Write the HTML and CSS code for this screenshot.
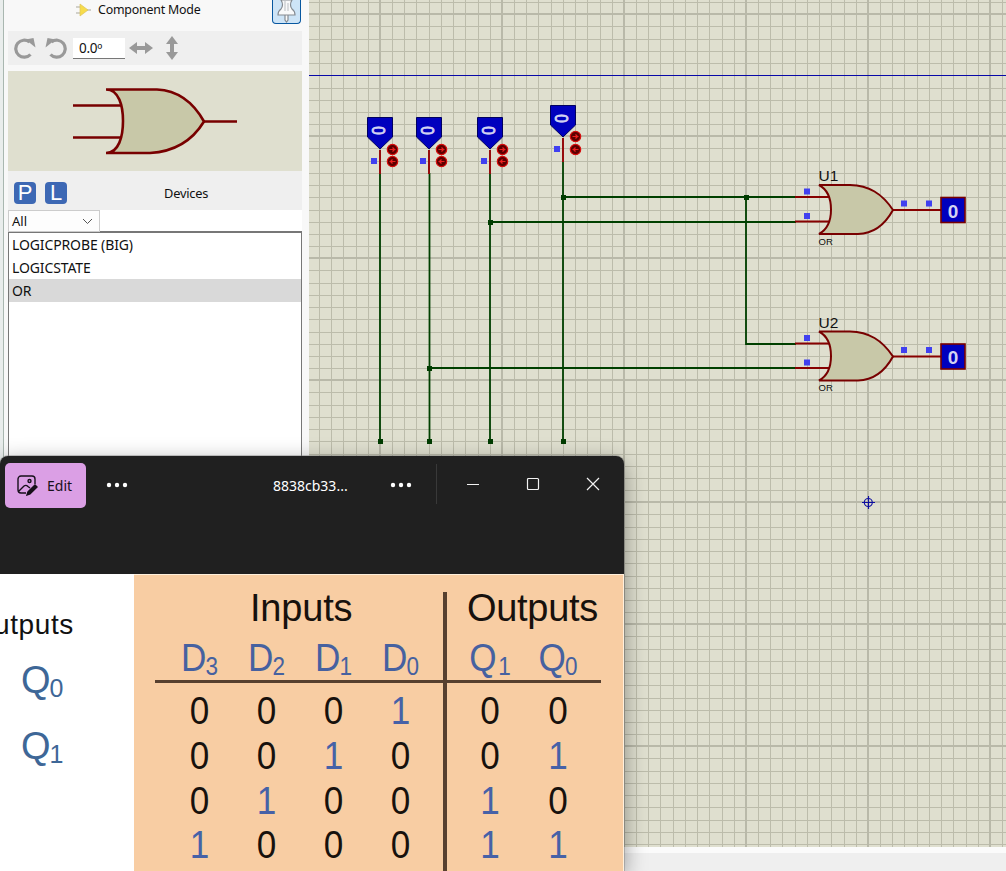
FILE: index.html
```html
<!DOCTYPE html>
<html lang="en">
<head>
<meta charset="utf-8">
<title>Schematic</title>
<link rel="stylesheet" href="styles.css">
</head>
<body>
<div class="app">
  <aside class="panel">
    <header class="mode">
      <svg class="mode-icon" width="16" height="14" viewBox="0 0 16 14"><path d="M1 4h5M1 10h5M12 7h4" stroke="#aaa89a"/><path d="M5 1l8 6-8 6z" fill="#f7dc4b" stroke="#dcc35c" stroke-width=".7"/></svg>
      <span class="mode-title">Component Mode</span>
      <span class="pin"><svg width="26" height="24" viewBox="0 0 26 24"><path d="M8 0q3 5 0 9-3 2-3 6h17q0-4-3-6-3-4 0-9zM12 15v5l1.500 2 1.500-2v-5" fill="#f8f9fa" stroke="#858b92" stroke-width="1.2"/><path d="M12 1v10M15 3v8" stroke="#b9bdc2"/></svg></span>
    </header>
    <div class="tools">
      <svg width="22" height="24" viewBox="0 0 22 24"><path d="M16.500 18.500A8.500 8.500 0 1 1 15.500 6" fill="none" stroke="#999" stroke-width="3.2"/><path d="M11.500 3.500L19.500 2l2 9.500z" fill="#999"/></svg>
      <svg class="undo" width="22" height="24" viewBox="0 0 22 24"><path d="M5.500 18.500A8.500 8.500 0 1 0 6.500 6" fill="none" stroke="#999" stroke-width="3.200"/><path d="M10.500 3.500L2.500 2l-2 9.500z" fill="#999"/></svg>
      <span class="angle">0.0º</span>
      <svg class="flip-h" width="24" height="14" viewBox="0 0 24 14"><path d="M0 7l8-6v4h8V1l8 6-8 6V9H8v4z" fill="#999"/></svg>
      <svg class="flip-v" width="14" height="24" viewBox="0 0 14 24"><path d="M7 0l6 8H9v8h4l-6 8-6-8h4V8H1z" fill="#999"/></svg>
    </div>
    <div class="preview">
      <svg width="294" height="100" viewBox="8 71 294 100" fill="none" stroke="#780000" stroke-width="2.6"><path d="M106 89.500H157Q187 91 204 121.500Q186 151 150 153H106C119 153 123 136 123 121S119 89.500 106 89.500Z" fill="#c8c8a8"/><path d="M73 105.500h48M73 137.500h48M204 121.500h33"/></svg>
    </div>
    <div class="devices">
      <div class="devices-head"><span class="key">P</span><span class="key">L</span><span class="devices-title">Devices</span></div>
      <div class="filter">
        <span class="select">All<svg width="11" height="7" viewBox="0 0 11 7"><path d="M1 1l4.500 4.500L10 1" fill="none" stroke="#555"/></svg></span>
        <span class="search"></span>
      </div>
      <ul class="list"><li>LOGICPROBE (BIG)</li><li>LOGICSTATE</li><li class="selected">OR</li></ul>
    </div>
  </aside>
  <main class="sheet">
    <svg class="canvas" width="697" height="847" viewBox="309 0 697 847">
      <defs>
        <pattern id="grid" x="379" y="13" width="122" height="122" patternUnits="userSpaceOnUse">
          <rect width="122" height="122" fill="#dfdfcf"/>
          <path d="M13.500 0v122M25.500 0v122M37.500 0v122M50.500 0v122M62.500 0v122M74.500 0v122M86.500 0v122M99.500 0v122M111.500 0v122M0 13.500h122M0 26.500h122M0 38.500h122M0 50.500h122M0 62.500h122M0 75.500h122M0 87.500h122M0 99.500h122M0 111.500h122" stroke="#bcbcab"/>
          <path d="M1 0v122M0 1h122" stroke="#b9b9a9" stroke-width="2"/>
        </pattern>
        <g id="tap"><circle r="5.200" fill="#5c0000" stroke="#d90d0d" stroke-width="1.200"/><path d="M-3 0h6M0-2l2 2-2 2" stroke="#ee2020" stroke-width="1.200" fill="none"/></g>
        <g id="switch">
          <path d="M0 33v24" stroke="#960d0d" stroke-width="2"/>
          <path d="M-12.500 .5h25V20L0 32-12.500 20z" fill="#0000be" stroke="#000060"/>
          <text transform="translate(4.500 13.500) rotate(-90) scale(.85 1)" text-anchor="middle" class="switch-value">0</text>
          <path d="M-9 41h6v6h-6z" fill="#4040f0"/>
        </g>
        <g id="gate">
          <path d="M-24 12.500h35M-24 37h35M74 25.500h48" stroke="#870000" stroke-width="2"/>
          <path d="M0 .5H31C50 1 63 9 74 25.500Q61 49 39 49.500H0Q12 43 12 25T0 .5Z" fill="#c8c8a8" stroke="#780000" stroke-width="2"/>
          <path d="M-15 4h6v6h-6zM-15 28.500h6v6h-6zM82 16h6v6h-6zM107 16h6v6h-6z" fill="#4040f0"/>
          <rect x="122" y="13" width="24" height="25" fill="#0000be" stroke="#780000" stroke-width="1.600"/>
          <text x="134" y="33" text-anchor="middle" class="probe-value">0</text>
          <text x="-.5" y="60" class="gate-type">OR</text>
        </g>
      </defs>
      <rect x="309" width="697" height="847" fill="url(#grid)"/>
      <rect x="309" y="75" width="697" height="1" fill="#0808a8"/>
      <path d="M380 173v268M429.500 173v268M490 173v268M563 162v279M563 197h233M490 222h306M746 197v147h50M429 368h367" fill="none" stroke="#004000" stroke-width="1.800"/>
      <path d="M378 439h5v5h-5zM427 439h5v5h-5zM488 439h5v5h-5zM561 439h5v5h-5zM561 195h5v5h-5zM488 220h5v5h-5zM744 195h5v5h-5zM427 366h5v5h-5z" fill="#003c00"/>
      <use href="#switch" x="380" y="117"/><use href="#switch" x="429" y="117"/><use href="#switch" x="490" y="117"/><use href="#switch" x="563" y="105"/>
      <use href="#tap" x="392.500" y="149.500"/><use href="#tap" transform="translate(392.500 161.500) rotate(180)"/>
      <use href="#tap" x="441.500" y="149.500"/><use href="#tap" transform="translate(441.500 161.500) rotate(180)"/>
      <use href="#tap" x="502.500" y="149.500"/><use href="#tap" transform="translate(502.500 161.500) rotate(180)"/>
      <use href="#tap" x="575.500" y="136.500"/><use href="#tap" transform="translate(575.500 149.500) rotate(180)"/>
      <use href="#gate" x="819" y="184.500"/><use href="#gate" x="819" y="331"/>
      <text x="818.500" y="181" class="ref">U1</text><text x="818.500" y="328" class="ref">U2</text>
      <g fill="none" stroke="#1010a0" stroke-width="1.200"><circle cx="868.300" cy="502.500" r="4"/><path d="M862 502.500h13M868.500 496v13"/></g>
    </svg>
    <div class="status"></div>
  </main>
</div>

<section class="viewer">
  <header class="bar">
    <button class="edit"><svg width="21" height="21" viewBox="0 0 21 21" fill="none" stroke="#17101a" stroke-width="1.400"><path d="M9 18H4a3 3 0 0 1-3-3V4a3 3 0 0 1 3-3h11a3 3 0 0 1 3 3v5M2 16l5-5q2-1.500 4 .5l2 1.500"/><circle cx="12.500" cy="6" r="1.500"/><path d="M18 10l2 2-7 7-3 1 1-3z" fill="#17101a"/></svg>Edit</button>
    <svg class="dots" width="22" height="6" viewBox="0 0 22 6"><circle cx="3" cy="3" r="2.200"/><circle cx="11" cy="3" r="2.200"/><circle cx="19" cy="3" r="2.200"/></svg>
    <span class="filename">8838cb33...</span>
    <svg class="dots dots-right" width="22" height="6" viewBox="0 0 22 6"><circle cx="3" cy="3" r="2.200"/><circle cx="11" cy="3" r="2.200"/><circle cx="19" cy="3" r="2.200"/></svg>
    <div class="window-buttons">
      <svg width="14" height="14" viewBox="0 0 14 14"><path d="M1 7.500h12"/></svg>
      <svg width="14" height="14" viewBox="0 0 14 14"><rect x="1.500" y="1.500" width="11" height="11" rx="1"/></svg>
      <svg width="14" height="14" viewBox="0 0 14 14"><path d="M1 1l12 12M13 1L1 13"/></svg>
    </div>
  </header>
  <div class="picture">
    <div class="diagram">
      <div class="diagram-title">utputs</div>
      <div class="pinname">Q<small>0</small></div>
      <div class="pinname">Q<small>1</small></div>
    </div>
    <div class="truth">
      <div class="heads"><span class="inputs">Inputs</span><span class="outputs">Outputs</span></div>
      <div class="row names"><span>D<small>3</small></span><span>D<small>2</small></span><span>D<small>1</small></span><span>D<small>0</small></span><i></i><span>Q<small class="spaced">1</small></span><span>Q<small>0</small></span></div>
      <div class="row"><span>0</span><span>0</span><span>0</span><b>1</b><i></i><span>0</span><span>0</span></div>
      <div class="row"><span>0</span><span>0</span><b>1</b><span>0</span><i></i><span>0</span><b>1</b></div>
      <div class="row"><span>0</span><b>1</b><span>0</span><span>0</span><i></i><b>1</b><span>0</span></div>
      <div class="row"><b>1</b><span>0</span><span>0</span><span>0</span><i></i><b>1</b><b>1</b></div>
      <div class="rule-h"></div><div class="rule-v"></div>
    </div>
  </div>
</section>
</body>
</html>
```
FILE: styles.css
```css
* { box-sizing: border-box; }
body { margin: 0; width: 1006px; height: 871px; overflow: hidden; position: relative; font-family: "Noto Sans", sans-serif; font-size: 13px; color: #111; background: #f8f8f8; }
.app { display: flex; height: 871px; }
.panel { width: 309px; padding: 0 7px 0 5px; border-left: 3px solid #e9edec; background: #f8f8f8; box-shadow: inset 1px 0 #a9b7b0; }
.mode { display: flex; align-items: flex-start; height: 31px; padding-left: 67px; }
.mode-icon { margin-top: 3px; }
.mode-title { margin-left: 7px; line-height: 20px; letter-spacing: -.2px; font-size: 12.4px; white-space: nowrap; }
.pin { margin-left: auto; margin-right: 1px; width: 29px; height: 24px; overflow: hidden; background: #cde4f7; border: 1px solid #0757a0; border-top: 0; border-radius: 0 0 4px 4px; }
.tools { display: flex; align-items: center; height: 34px; padding-left: 6px; background: #efefef; }
.tools svg { flex: none; }
.undo { margin-left: 9px; }
.angle { width: 52px; height: 21px; margin-left: 6px; padding-left: 6px; line-height: 20px; background: #fff; border-bottom: 1px solid #777; font-size: 13.5px; letter-spacing: -.3px; }
.flip-h { margin-left: 4px; }
.flip-v { margin-left: 12px; }
.preview { height: 100px; margin-top: 6px; background: #dfdfcf; }
.preview svg { display: block; }
.devices { background: #efefef; height: 700px; }
.devices-head { display: flex; align-items: center; height: 39px; padding: 5px 0 0 6px; gap: 9px; }
.key { width: 22px; height: 22px; border-radius: 4px; background: #3d68b4; color: #fff; font: 22px/22px "Liberation Sans", sans-serif; text-align: center; }
.devices-title { margin-left: 88px; letter-spacing: -.2px; font-size: 12.8px; }
.filter { display: flex; height: 22px; }
.select { display: flex; align-items: center; justify-content: space-between; width: 92px; padding: 0 6px 0 3px; background: #fdfdfd; border: 1px solid #ccc; }
.search { flex: 1; background: #fff; border-bottom: 1px solid #777; }
.list { margin: 0; padding: 0; height: 639px; list-style: none; background: #fff; border: 1px solid #777; font-size: 14px; }
.list li { height: 23px; padding-left: 3px; line-height: 23px; letter-spacing: -.12px; }
.list .selected { background: #d9d9d9; }
.sheet { width: 697px; display: flex; flex-direction: column; }
.canvas { display: block; }
.status { flex: 1; background: #efefef; border-top: 6px solid #fbfbfb; }
.switch-value { font: 20px "Liberation Sans", sans-serif; font-size: 18px; fill: #d2d2f2; stroke: #d2d2f2; stroke-width: .9px; }
.probe-value { font: bold 19px "Liberation Sans", sans-serif; fill: #d2d2f2; }
.ref { font: 15.5px "Liberation Sans", sans-serif; fill: #111; }
.gate-type { font: 9.5px "Liberation Sans", sans-serif; fill: #111; }
.viewer { position: absolute; left: 0; top: 456px; width: 624px; height: 415px; background: #202020; border-radius: 8px 8px 0 0; box-shadow: 0 0 0 1px #77777766, 0 6px 22px #0006; overflow: hidden; }
.bar { display: flex; align-items: center; height: 118px; padding: 0 24px 60px 5px; color: #fff; font-size: 14px; }
.edit { display: flex; align-items: center; gap: 9px; width: 81px; height: 45px; margin-top: 1px; padding: 0 0 0 12px; border: 0; border-radius: 5px; background: #db9fe5; color: #17101a; font: 14px "Noto Sans", sans-serif; }
.dots { margin-left: 20px; fill: #fff; }
.filename { margin-left: 145px; width: 78px; white-space: nowrap; letter-spacing: 0; }
.dots-right { margin-left: 39px; }
.window-buttons { display: flex; justify-content: space-between; align-items: center; width: 164px; height: 40px; margin: -2px 0 0 auto; padding-left: 29px; border-left: 1px solid #393939; }
.window-buttons svg { fill: none; stroke: #f2f2f2; stroke-width: 1.2px; }
.picture { display: flex; height: 297px; font-family: "Liberation Sans", sans-serif; }
.diagram { width: 134px; background: #fff; padding-top: 35px; }
.diagram-title { margin-left: -6px; font-size: 28px; line-height: 32px; letter-spacing: .6px; }
.pinname { margin: 19px 0 0 21px; height: 47px; font-size: 38px; line-height: 40px; letter-spacing: -1px; color: #3e6797; }
.picture small { font-size: 25px; position: relative; top: 4px; letter-spacing: 0; }
.truth { position: relative; width: 490px; padding: 11px 0 0 32px; background: #f8cda3; border-right: 1px solid #fff0dc; border-top: 1px solid #fff0dc; color: #17110d; }
.heads { display: flex; height: 44px; font-size: 38px; line-height: 44px; }
.inputs { width: 218px; padding-left: 84px; letter-spacing: -.2px; }
.outputs { padding-left: 83px; letter-spacing: -.3px; }
.row { display: grid; grid-template-columns: repeat(4, 67px) 22px 68px 68px; height: 44.8px; line-height: 45px; font-size: 39px; text-align: center; }
.row span, .row b { transform: scaleX(.9); }
.row b { font-weight: normal; color: #4661a7; }
.names { height: 58px; font-size: 39px; line-height: 56px; letter-spacing: -1px; color: #4661a0; }
.names .spaced { margin-left: 3px; }
.rule-h { position: absolute; left: 21px; top: 105px; width: 446px; height: 3px; background: #57402f; }
.rule-v { position: absolute; left: 309px; top: 17px; width: 4px; height: 290px; background: #57402f; }
```
